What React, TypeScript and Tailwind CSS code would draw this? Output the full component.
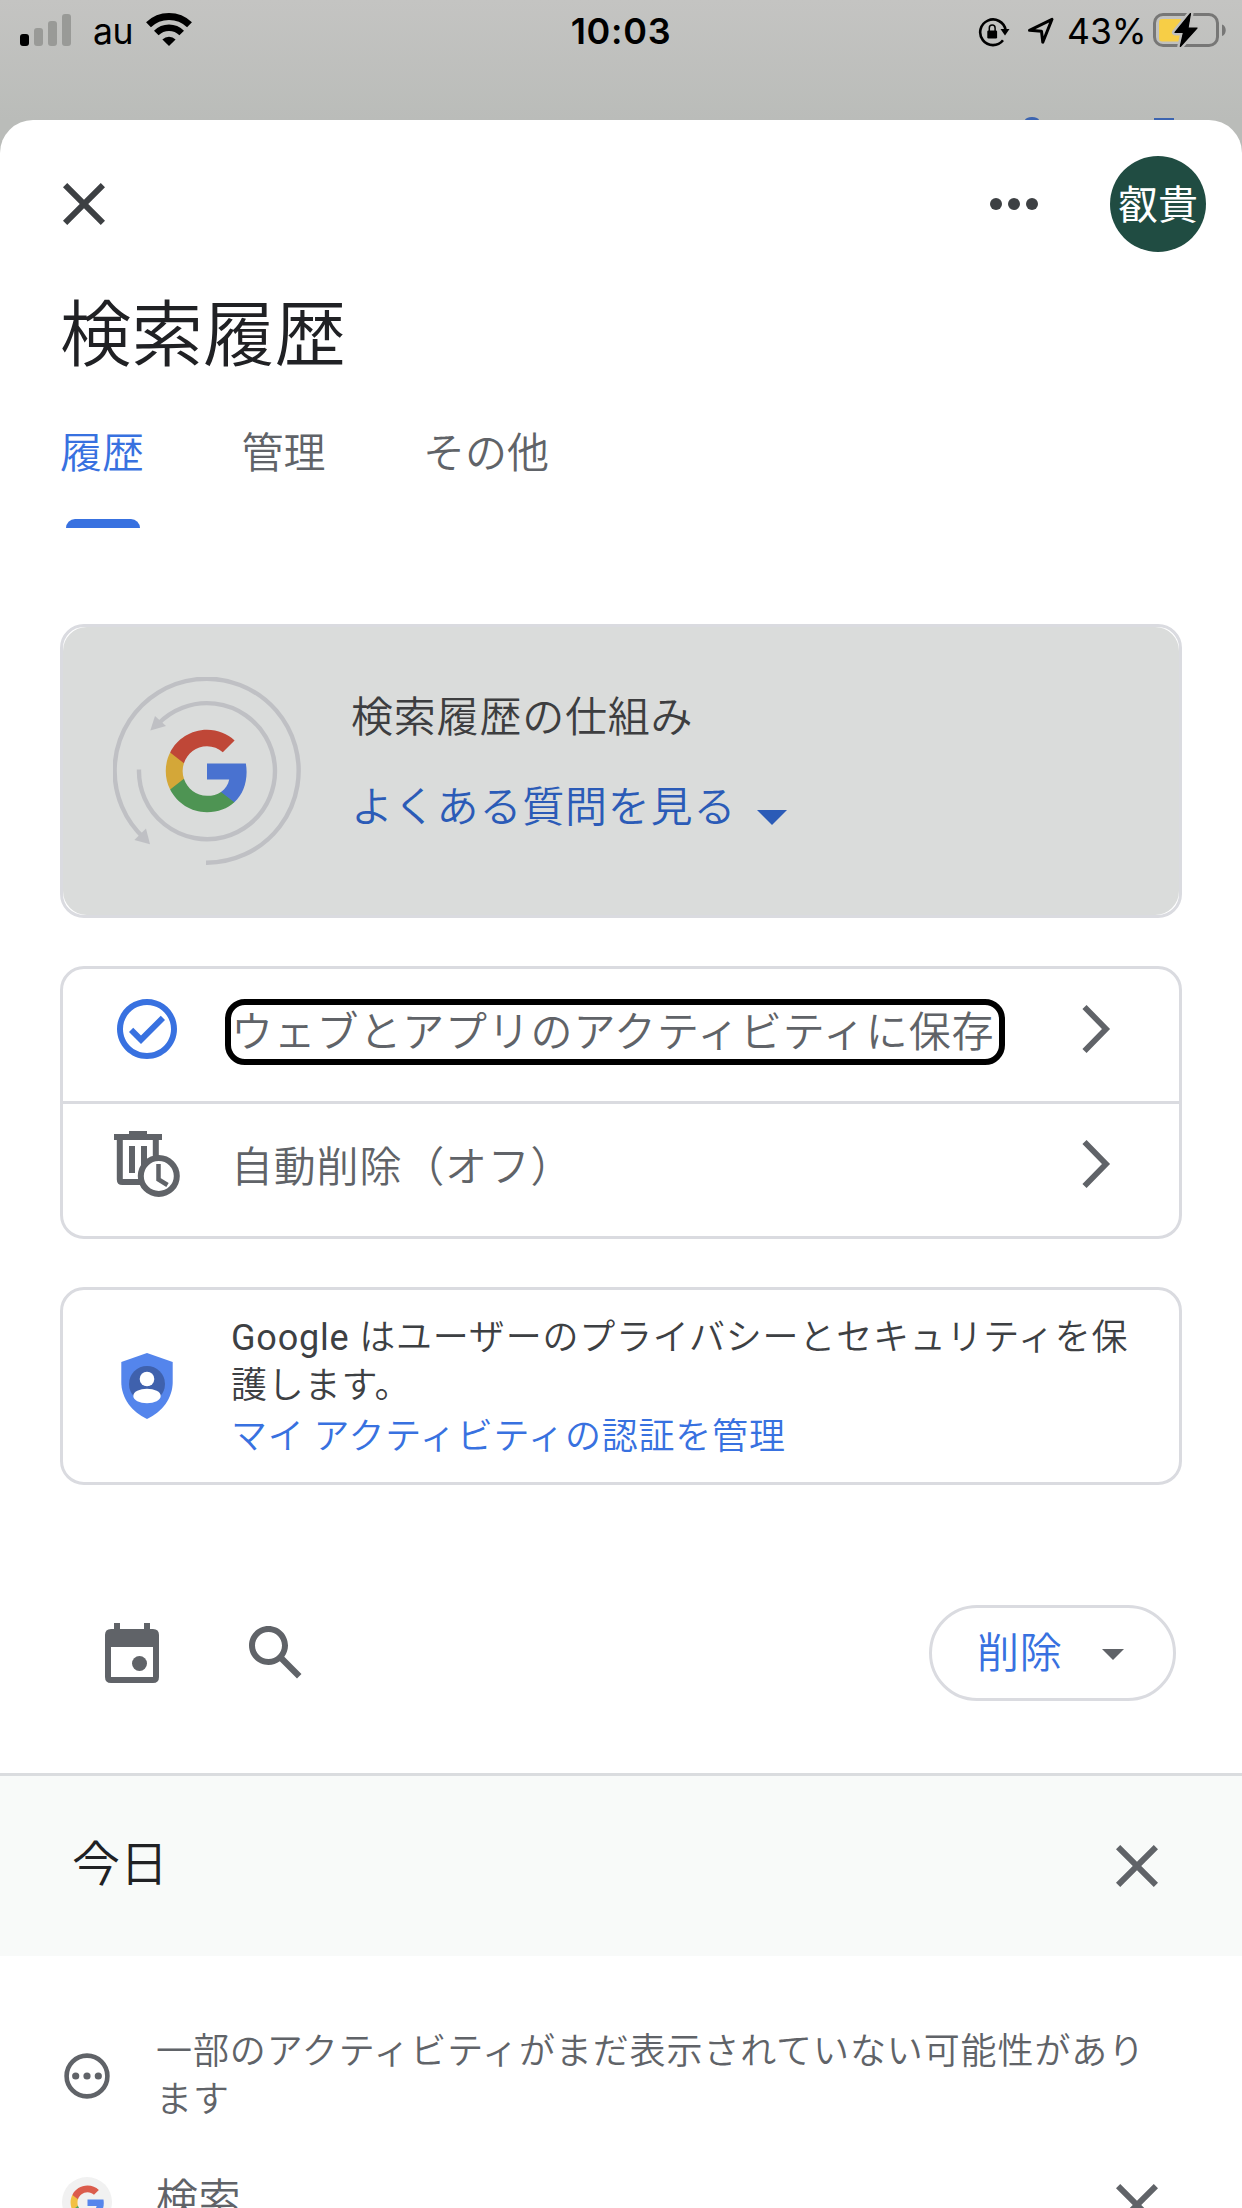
import React from "react";

const jp = "font-['Noto_Sans_CJK_JP',sans-serif] font-[350]";

function CloseIcon({ className }: { className: string }) {
  return (
    <svg viewBox="0 0 24 24" className={`size-[72px] shrink-0 fill-current ${className}`}>
      <path d="M19 6.41L17.59 5 12 10.59 6.41 5 5 6.41 10.59 12 5 17.59 6.41 19 12 13.41 17.59 19 19 17.59 13.41 12z" />
    </svg>
  );
}

type GColors = { red: string; yellow: string; green: string; blue: string };

function GoogleG({ colors, ...rest }: { colors: GColors } & React.SVGProps<SVGSVGElement>) {
  return (
    <svg viewBox="0 0 48 48" {...rest}>
      <path fill={colors.blue} d="M45.12 24.5c0-1.56-.14-3.06-.4-4.5H24v8.51h11.84c-.51 2.75-2.06 5.08-4.39 6.64v5.52h7.11c4.16-3.83 6.56-9.47 6.56-16.17z" />
      <path fill={colors.green} d="M24 46c5.94 0 10.92-1.97 14.56-5.33l-7.11-5.52c-1.97 1.32-4.49 2.1-7.45 2.1-5.73 0-10.58-3.87-12.31-9.07H4.34v5.7C7.96 41.07 15.4 46 24 46z" />
      <path fill={colors.yellow} d="M11.69 28.18C11.25 26.86 11 25.45 11 24s.25-2.86.69-4.18v-5.7H4.34C2.85 17.09 2 20.45 2 24c0 3.55.85 6.91 2.34 9.88l7.35-5.7z" />
      <path fill={colors.red} d="M24 10.75c3.23 0 6.13 1.11 8.41 3.29l6.31-6.31C34.91 4.18 29.93 2 24 2 15.4 2 7.96 6.93 4.34 14.12l7.35 5.7c1.73-5.2 6.58-9.07 12.31-9.07z" />
    </svg>
  );
}

function HistoryArt() {
  return (
    <svg viewBox="0 0 188 188" className="size-[188px] shrink-0">
      <g fill="none" stroke="#bfc0c4" strokeWidth="4.400">
        <path d="M93 185.700A92 92 0 1 0 32 162" />
        <path d="M26 92.500A68 68 0 1 0 45 47" />
      </g>
      <g fill="#bfc0c4">
        <path d="M33 151.500L21.300 163l15.700 4.300z" />
        <path d="M42 39l11 10-15.700 4.600z" />
      </g>
      <GoogleG
        x="49"
        y="49"
        width="90"
        height="90"
        colors={{ red: "#bf4737", yellow: "#d4a738", green: "#4e9453", blue: "#4972d0" }}
      />
    </svg>
  );
}

function StatusBar() {
  return (
    <div className="relative flex h-[120px] shrink-0 items-start font-['Inter',sans-serif] font-normal text-black">
      <svg viewBox="0 0 52 34" className="ml-5 mt-[13px] h-[34px] w-[52px]">
        <rect x="0" y="21" width="9" height="12" rx="3" fill="#000" />
        <g fill="#999a97">
          <rect x="14" y="15" width="9" height="18" rx="3" />
          <rect x="28" y="8" width="9" height="25" rx="3" />
          <rect x="42" y="1" width="9" height="32" rx="3" />
        </g>
      </svg>
      <span className="ml-[21px] mt-[10px] w-[53px] text-[35.500px] leading-[44px] tracking-[-0.5px]">au</span>
      <svg viewBox="0 0 46 34" className="mt-[13px] h-[34px] w-[46px]">
        <g fill="none" stroke="#000" strokeWidth="7">
          <path d="M2.500 11.800a29.500 29.500 0 0 1 41 0" />
          <path d="M10.300 20a18 18 0 0 1 25.400 0" strokeWidth="6.500" />
        </g>
        <path d="M23 33l-6.600-6.400a9.300 9.300 0 0 1 13.200 0z" />
      </svg>
      <div className="absolute inset-x-0 top-[9px] text-center text-[36px] font-semibold leading-[44px] tracking-[0.7px]">
        10:03
      </div>
      <div className="ml-auto flex items-start pr-[15px]">
        <svg viewBox="0 0 32 30" className="mt-[17px] h-[30px] w-[32px]">
          <path d="M25 23.300A12.800 12.800 0 1 1 27.600 13" fill="none" stroke="#000" strokeWidth="2.600" />
          <path d="M22.500 12h9L27 18.500z" />
          <rect x="9.300" y="13.500" width="9.800" height="8" rx="1.200" />
          <path d="M11.300 14v-3a2.900 2.900 0 0 1 5.800 0v3" fill="none" stroke="#000" strokeWidth="1.500" />
        </svg>
        <svg viewBox="0 0 28 28" className="ml-[17px] mt-[17px] size-[28px]">
          <path d="M2.500 13.300L25 2.300 15.800 25.200l-1.300-11z" fill="none" stroke="#000" strokeWidth="3" strokeLinejoin="round" />
        </svg>
        <span className="ml-[12px] mt-[10px] w-[80px] whitespace-nowrap text-[35.500px] leading-[44px]">43%</span>
        <svg viewBox="0 0 74 36" className="ml-[6px] mt-3 h-[36px] w-[74px]">
          <rect x="1.500" y="2.500" width="63" height="31" rx="8.500" fill="none" stroke="#777776" strokeWidth="3" />
          <path d="M69 12.500c5 1.500 5 10 0 11.500z" fill="#777776" />
          <path d="M9 7h19v22.500H9a3 3 0 0 1-3-3V10a3 3 0 0 1 3-3z" fill="#f7ce46" />
          <path
            d="M37.500 1.500L22 20.500h8.500L27.300 34.500 44 16h-9z"
            fill="#000"
            stroke="#c0c0be"
            strokeWidth="6"
            strokeLinejoin="round"
            paintOrder="stroke"
          />
          <path d="M37.500 1.500L22 20.500h8.500L27.300 34.500 44 16h-9z" stroke="#000" strokeWidth="1.200" strokeLinejoin="round" />
        </svg>
      </div>
      <div className="absolute bottom-0 left-[1025px] h-[3px] w-[14px] rounded-[50%_50%_0_0/100%_100%_0_0] bg-[#3c64b0]" />
      <div className="absolute bottom-0 left-[1154px] h-[2px] w-[20px] bg-[#3c64b0]" />
    </div>
  );
}

function Chevron() {
  return (
    <svg viewBox="0 0 30 50" className="ml-auto h-[50px] w-[30px] shrink-0">
      <path d="M3.500 3L25 25 3.500 47" fill="none" stroke="#606368" strokeWidth="5.800" />
    </svg>
  );
}

function Tab({ label, active = false }: { label: string; active?: boolean }) {
  return (
    <div className={`flex flex-col items-center ${active ? "text-[#3871e0]" : "text-[#606368]"}`}>
      <span className="text-[42px] leading-[48px]">{label}</span>
      {active && <span className="ml-[2px] mt-[45px] h-[9px] w-[74px] rounded-t-[9px] bg-[#3871e0]" />}
    </div>
  );
}

export default function App() {
  return (
    <div className={`flex h-[2208px] w-[1242px] flex-col overflow-hidden bg-[linear-gradient(#c4c4c2_0px,#babcb9_120px,#babcb9_100%)] ${jp}`}>
      <StatusBar />
      <main className="flex-1 rounded-t-[33px] bg-white">
        <header className="flex h-[168px] items-center pl-12 pr-9">
          <CloseIcon className="text-[#3d4043]" />
          <svg viewBox="0 0 72 72" className="ml-auto size-[72px] fill-[#3d4043]">
            <circle cx="18" cy="36" r="6" />
            <circle cx="36" cy="36" r="6" />
            <circle cx="54" cy="36" r="6" />
          </svg>
          <div className="ml-[60px] flex size-24 items-center justify-center rounded-full bg-[#204c42] pb-1 text-[40px] font-normal leading-none text-white">
            叡貴
          </div>
        </header>

        <h1 className="ml-[60px] mt-px text-[71.500px] leading-[80px] text-[#202124]">検索履歴</h1>

        <nav className="ml-[60px] mt-[57px] flex h-[102px] gap-[97.5px]">
          <Tab label="履歴" active />
          <Tab label="管理" />
          <Tab label="その他" />
        </nav>

        <section className="mx-[60px] mt-24 h-[294px] rounded-[24px] border-[3px] border-[#dadbe0] bg-white">
          <div className="flex h-full items-center rounded-[24px] bg-[#dadcdb] pl-[50px]">
            <HistoryArt />
            <div className="ml-[50px] pb-6 text-[42px] leading-[48px] tracking-[0.8px]">
              <p className="text-[#3d3e40]">検索履歴の仕組み</p>
              <div className="mt-[42px] flex items-center text-[#2b5bb7]">
                <span>よくある質問を見る</span>
                <svg viewBox="0 0 30 15" className="ml-[21px] mt-[27px] h-[15px] w-[30px] fill-current">
                  <path d="M0 0h30L15 15z" />
                </svg>
              </div>
            </div>
          </div>
        </section>

        <section className="mx-[60px] mt-12 rounded-[24px] border-[3px] border-[#dadbe0] text-[42px] leading-[48px] tracking-[0.8px] text-[#606368]">
          <div className="flex h-[135px] items-center border-b-[3px] border-[#dadbe0] pb-3 pl-12 pr-[68px]">
            <svg viewBox="0 0 24 24" className="size-[72px] fill-[#3871e0]">
              <path d="M12 2C6.480 2 2 6.480 2 12s4.480 10 10 10 10-4.480 10-10S17.520 2 12 2zm0 18c-4.410 0-8-3.590-8-8s3.590-8 8-8 8 3.590 8 8-3.590 8-8 8zm4.590-12.420L10 14.170l-2.590-2.580L6 13l4 4 8-8z" />
            </svg>
            <span className="-mb-1.5 ml-[42px] flex h-[66px] w-[780px] items-center whitespace-nowrap rounded-[20px] border-[6px] border-black pb-1.5">
              ウェブとアプリのアクティビティに保存
            </span>
            <Chevron />
          </div>
          <div className="flex h-[132px] items-center pb-3 pl-12 pr-[68px]">
            <svg viewBox="0 0 72 72" className="size-[72px]">
              <g fill="#606368">
                <path d="M18 3h18v3h15v6H3V6h15z" />
                <path d="M18 18h6v27h-6zM30 18h6v27h-6z" />
              </g>
              <path d="M8.800 11v40.500q0 2.500 2.500 2.500H30M44.800 11v18" fill="none" stroke="#606368" strokeWidth="6" />
              <circle cx="47.800" cy="48" r="18" fill="#fff" stroke="#606368" strokeWidth="6" />
              <path d="M47.500 36v15.500l9 5.500" fill="none" stroke="#606368" strokeWidth="4.500" />
            </svg>
            <span className="ml-12">自動削除（オフ）</span>
            <Chevron />
          </div>
        </section>

        <section className="mx-[60px] mt-12 flex h-[198px] items-center rounded-[24px] border-[3px] border-[#dadbe0] pl-12">
          <svg viewBox="0 0 72 72" className="size-[72px] shrink-0">
            <path d="M36 3L10.300 12v20c0 16 10.500 30 25.700 37 15.200-7 25.700-21 25.700-37V12z" fill="#5485ec" />
            <circle cx="36" cy="34" r="18" fill="#3f61ad" />
            <circle cx="36" cy="29" r="7.300" fill="#fff" />
            <ellipse cx="36" cy="46" rx="13.700" ry="7.300" fill="#fff" />
          </svg>
          <div className="ml-12 w-[920px] pb-[2px] text-[36px] leading-[48px] tracking-[0.8px] text-[#3d4043]">
            <p className="font-['Roboto','Noto_Sans_CJK_JP',sans-serif]">
              <span className="font-normal">Google </span>
              はユーザーのプライバシーとセキュリティを保護します。
            </p>
            <p className="-mt-px text-[#3871e0]">マイ アクティビティの認証を管理</p>
          </div>
        </section>

        <div className="flex h-[288px] items-start pl-24 pr-[66px] pt-[120px]">
          <svg viewBox="0 0 72 72" className="mt-3 size-[72px]">
            <path
              fillRule="evenodd"
              d="M18 6h6v6h24V6h6v6h3q6 0 6 6v42q0 6-6 6H15q-6 0-6-6V18q0-6 6-6h3zM15 30v30h42V30z"
              fill="#606368"
            />
            <circle cx="43.500" cy="46.500" r="7.500" fill="#606368" />
          </svg>
          <svg viewBox="0 0 24 24" className="ml-[72px] mt-3 size-[72px] fill-[#606368]">
            <path d="M20.490 19l-5.730-5.730C15.530 12.200 16 10.910 16 9.500 16 5.910 13.090 3 9.500 3S3 5.910 3 9.500 5.910 16 9.500 16c1.410 0 2.700-.470 3.770-1.240L19 20.490 20.490 19zM5 9.500C5 7.010 7.010 5 9.500 5S14 7.010 14 9.500 11.990 14 9.500 14 5 11.990 5 9.500z" />
          </svg>
          <button className="ml-auto flex h-24 w-[247px] items-center rounded-full border-[3px] border-[#dadbe0] pb-1.5 pl-[45px] text-[42px] leading-[48px] tracking-[0.8px] text-[#3871e0]">
            削除
            <svg viewBox="0 0 22 11" className="ml-[39px] mt-2 h-[11px] w-[22px] fill-[#606368]">
              <path d="M0 0h22L11 11z" />
            </svg>
          </button>
        </div>

        <div className="flex h-[183px] items-center border-t-[3px] border-[#dadcdf] bg-[#f8faf9] pl-[72px] pr-[69px]">
          <h2 className="pb-3 text-[48px] leading-[56px] text-[#202124]">今日</h2>
          <CloseIcon className="ml-auto text-[#606368]" />
        </div>

        <div className="mt-[68px] flex items-center pl-[63px] text-[#606368]">
          <svg viewBox="0 0 48 48" className="mt-2 size-[48px] shrink-0">
            <circle cx="24" cy="24" r="20.400" fill="none" stroke="#606368" strokeWidth="4.600" />
            <g fill="#606368">
              <circle cx="12.700" cy="24" r="3.600" />
              <circle cx="24" cy="24" r="3.600" />
              <circle cx="35.300" cy="24" r="3.600" />
            </g>
          </svg>
          <p className="ml-[45px] w-[1010px] text-[36px] leading-[48px] tracking-[0.9px]">
            一部のアクティビティがまだ表示されていない可能性があります
          </p>
        </div>

        <div className="mt-[55px] flex h-[54px] items-center pl-[62px] pr-[69px] text-[#606368]">
          <div className="flex size-[50px] items-center justify-center rounded-full bg-[#f1f1f1]">
            <GoogleG
              className="size-[37px]"
              colors={{ red: "#db5c4c", yellow: "#f2c042", green: "#58a55d", blue: "#5686ec" }}
            />
          </div>
          <span className="ml-[44px] pb-3 text-[42px] leading-[48px] tracking-[0.5px]">検索</span>
          <CloseIcon className="ml-auto mt-1.5 text-[#606368]" />
        </div>
      </main>
    </div>
  );
}
